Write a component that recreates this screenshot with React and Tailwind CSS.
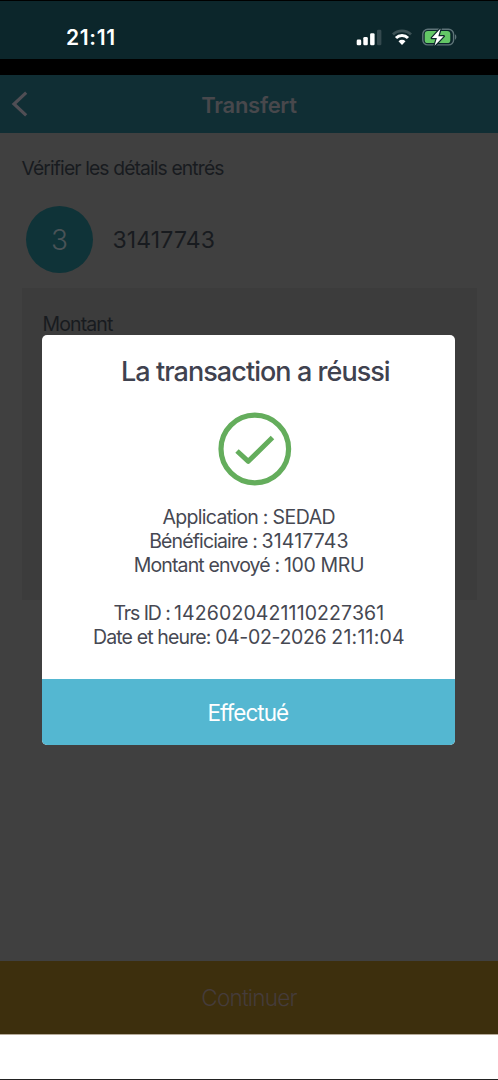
function SignalIcon() {
  return (
    <svg className="h-[18px] w-[26px]" viewBox="0 0 26 18">
      <rect x="0.7" y="11.6" width="4.5" height="5.6" rx="1.3" fill="#fff" />
      <rect x="7.3" y="9" width="4.5" height="8.2" rx="1.3" fill="#fff" />
      <rect x="14.1" y="5.2" width="4.5" height="12" rx="1.3" fill="#fff" />
      <rect x="21" y="1.8" width="4.4" height="15.4" rx="1.3" fill="#34494e" />
    </svg>
  );
}

function WifiIcon() {
  return (
    <svg className="h-[18px] w-[22px]" viewBox="0 0 22 18" fill="none">
      <path d="M2 6.6a12.7 12.7 0 0 1 18 0" stroke="#3c5155" strokeWidth="2.8" />
      <path d="M5 10a8.4 8.4 0 0 1 12 0" stroke="#fff" strokeWidth="3" />
      <path d="M7.5 13.3a4.9 4.9 0 0 1 7 0L11 17z" fill="#fff" />
    </svg>
  );
}

function BatteryIcon() {
  return (
    <svg className="h-[20px] w-[36px]" viewBox="0 0 36 20">
      <rect x="0.8" y="2.3" width="30.8" height="15.6" rx="5" fill="none" stroke="#5e7378" strokeWidth="1.4" />
      <path d="M33 7.3c1.8.8 1.8 4.6 0 5.4z" fill="#5e7378" />
      <rect x="2.7" y="4.1" width="25.6" height="12" rx="3.2" fill="#63c766" />
      <path
        d="M18.6 1.6 9.8 11h5.1l-2.4 7.8 9.2-9.6h-5.4z"
        fill="#fff"
        stroke="#0c262b"
        strokeWidth="2.4"
        strokeLinejoin="round"
        paintOrder="stroke"
      />
    </svg>
  );
}

function StatusBar() {
  return (
    <div className="flex h-[59px] shrink-0 justify-between border-t border-black bg-[#0c262b] pr-[40px] pl-[66px]">
      <span className="mt-[22px] text-[21px] leading-[30px] font-semibold tracking-[0.7px] text-white">21:11</span>
      <div className="mt-[26px] flex h-5 items-center">
        <SignalIcon />
        <div className="ml-[9px] flex">
          <WifiIcon />
        </div>
        <div className="ml-[9px] flex">
          <BatteryIcon />
        </div>
      </div>
    </div>
  );
}

function Header() {
  return (
    <header className="mt-4 flex h-[58px] shrink-0 items-center bg-[#102e34]">
      <svg className="ml-[11px] h-[26px] w-[18px]" viewBox="0 0 18 26" fill="none">
        <path d="M15.2 1.6 3 13l12.2 11.4" stroke="#504e54" strokeWidth="3.2" />
      </svg>
      <h1 className="mt-px mr-[29px] flex-1 text-center text-[22px] leading-[30px] font-semibold tracking-[-0.28px] text-[#48484c]">
        Transfert
      </h1>
    </header>
  );
}

function Details() {
  return (
    <main className="flex flex-1 flex-col bg-[#404040] px-[21.5px] pt-[23px] text-[#181b1f]">
      <p className="text-[19.3px] leading-6 tracking-[-0.87px]">Vérifier les détails entrés</p>
      <div className="mt-[26px] ml-[4.5px] flex items-center">
        <div className="flex size-[67px] items-center justify-center rounded-full bg-[#0f3338] text-[28px] font-light text-[#4a5357]">
          3
        </div>
        <span className="mt-[2px] ml-[19.5px] text-[23px] tracking-[0.12px]">31417743</span>
      </div>
      <div className="mt-[15px] h-[312px] bg-[#3c3c3c] px-[21px] pt-[23.5px]">
        <p className="text-[19.5px] leading-6 tracking-[-0.88px]">Montant</p>
      </div>
    </main>
  );
}

function SuccessDialog() {
  return (
    <div
      role="dialog"
      className="absolute top-[334.5px] left-[42.4px] flex h-[410.5px] w-[413px] flex-col overflow-hidden rounded-[5px] bg-white text-center text-[#464852]"
    >
      <h2 className="mt-[19px] ml-[13px] text-[27px] leading-9 font-medium tracking-[-0.95px] text-[#3f424f]">
        La transaction a réussi
      </h2>
      <svg className="mt-[22px] ml-[176px] size-[74px] shrink-0" viewBox="0 0 74 74" fill="none" stroke="#64ad5c">
        <circle cx="36.8" cy="37" r="33.8" strokeWidth="5.2" />
        <path d="M19 39 30.3 49.3 54.5 25.5" strokeWidth="5" strokeLinejoin="round" />
      </svg>
      <div className="mt-[19px] text-[19.5px] leading-[24.1px] tracking-[-0.5px] whitespace-pre">
        <p>
          <span className="tracking-[-0.72px]">Application : </span>SEDAD
        </p>
        <p>
          <span className="tracking-[-0.87px]">Bénéficiaire : </span>
          <span className="tracking-[0.12px]">31417743</span>
        </p>
        <p>
          <span className="tracking-[-0.85px]">Montant envoyé : </span>
          <span className="tracking-[-0.35px]">100 MRU</span>
        </p>
        <p className="mt-[24.1px]">
          <span className="tracking-[-1.1px]">Trs ID : </span>
          <span className="tracking-[0.11px]">1426020421110227361</span>
        </p>
        <p>
          <span className="tracking-[-0.87px]">Date et heure: </span>
          <span className="tracking-[-0.35px]">04-02-2026 </span>
          <span className="tracking-[0.2px]">21:11:04</span>
        </p>
      </div>
      <button className="mt-auto h-[66px] shrink-0 bg-[#54b7d1] pt-[2px] pr-[2px] text-[22.5px] tracking-[-0.95px] text-white">
        Effectué
      </button>
    </div>
  );
}

export default function App() {
  return (
    <div className="relative flex h-[1080px] w-[498px] flex-col overflow-hidden bg-black font-['Inter',sans-serif]">
      <StatusBar />
      <Header />
      <Details />
      <button className="h-[73px] shrink-0 bg-[#3d2f0d] text-[22.5px] font-light tracking-[-0.8px] text-[#453c3b]">
        Continuer
      </button>
      <div className="h-[46px] shrink-0 border-t border-b border-t-[#b5aa99] border-b-[#222] bg-white" />
      <SuccessDialog />
    </div>
  );
}
